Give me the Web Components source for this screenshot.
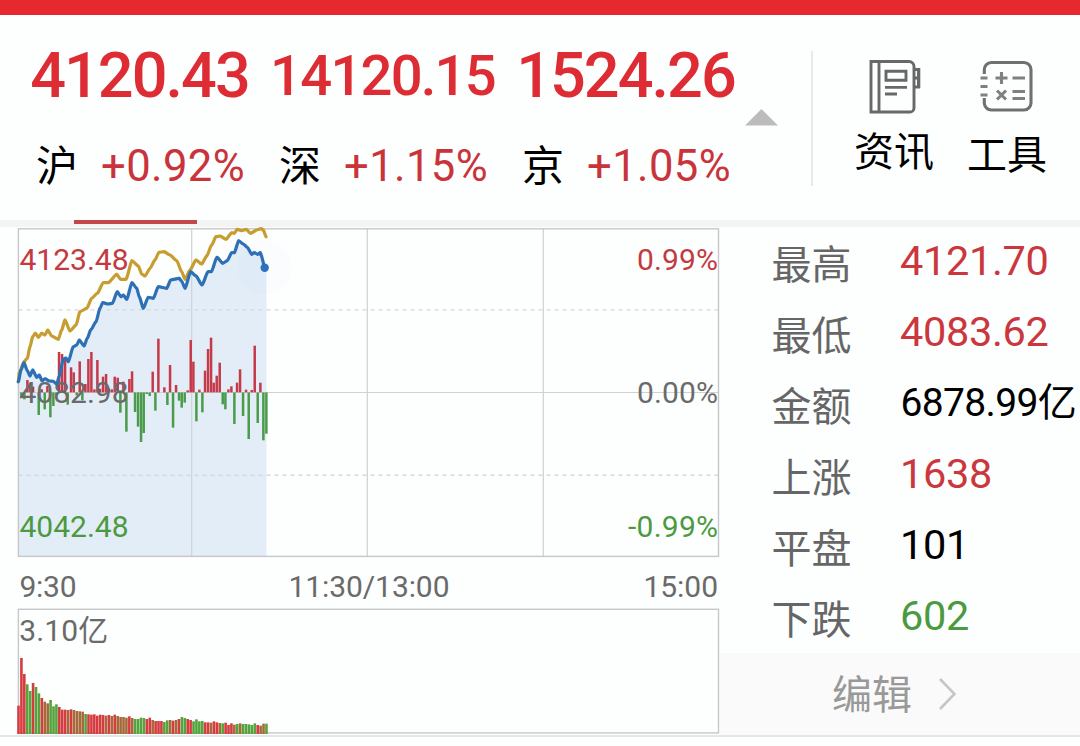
<!DOCTYPE html>
<html lang="zh-CN">
<head>
<meta charset="utf-8">
<title>行情</title>
<style>
html,body{margin:0;height:100%;overflow:hidden;background:#fdfefe}
body{font-family:Roboto,"Noto Sans CJK SC",sans-serif;color:#000}
</style>
</head>
<body>
<market-page></market-page>
<script>
function define(name, html, ready) {
  const t = document.createElement('template');
  t.innerHTML = html;
  customElements.define(name, class extends HTMLElement {
    constructor() {
      super();
      this.attachShadow({mode: 'open'}).append(t.content.cloneNode(true));
    }
    connectedCallback() { if (ready) ready(this, this.shadowRoot); }
  });
}

define('index-quote', `
<style>
:host{display:block;width:243px;flex:none}
.price{height:94px;line-height:94px;font-size:63px;font-weight:500;color:#dd2c33;letter-spacing:-1.95px;text-align:center;white-space:nowrap;padding-left:4px;box-sizing:border-box}
:host([compact]) .price{font-size:56.2px;letter-spacing:-1.8px}
.row{display:flex;height:88px;line-height:88px;padding-left:20px;white-space:nowrap}
.name{width:65px;font-size:42px}
.pct{font-size:43.6px;color:#c9343b;letter-spacing:.4px}
</style>
<div class="price"><slot name="price"></slot></div>
<div class="row"><span class="name"><slot name="name"></slot></span><span class="pct"><slot></slot></span></div>`);

define('tool-button', `
<style>
:host{display:flex;flex-direction:column;align-items:center;width:80px;font-size:40px}
.label{line-height:56px;white-space:nowrap;padding-top:2px}
::slotted(svg){display:block}
</style><slot name="icon"></slot><div class="label"><slot></slot></div>`);

define('app-header', `
<style>
:host{display:flex;height:205px;border-top:15px solid #e6282f;border-bottom:7px solid #f4f4f5;box-sizing:content-box;position:relative}
.quotes{display:flex;padding:14px 0 0 16px;box-sizing:border-box;width:745px}
.arrow{width:34px;height:17px;margin-top:94px;display:block}
.sep{width:2px;height:135px;margin:36px 0 0 32px;background:#e8e9e9}
.tools{display:flex;gap:33px;margin-left:41px}
tool-button:first-child{padding-top:44px}
tool-button:last-child{padding-top:45px}
.mark{position:absolute;left:74px;top:205px;width:123px;height:4px;background:#c2474c}
</style>
<div class="quotes">
<index-quote><span slot="price">4120.43</span><span slot="name">沪</span>+0.92%</index-quote>
<index-quote compact><span slot="price">14120.15</span><span slot="name">深</span>+1.15%</index-quote>
<index-quote><span slot="price">1524.26</span><span slot="name">京</span>+1.05%</index-quote>
</div>
<svg class="arrow" viewBox="0 0 34 17"><path d="M16.5 0 33 16.5H0Z" fill="#bcbcbc"/></svg>
<div class="sep"></div>
<div class="tools">
<tool-button><svg slot="icon" width="54" height="64" viewBox="-1 0 54 64" fill="none" stroke="#686868" stroke-width="2.9"><path d="M3 2.5H41a5 5 0 0 1 5 5V49a4 4 0 0 1-4 4H3ZM11 2V53M46.5 10.5h4v17.5h-4M46 19h5"/><path d="M51 9v20" stroke-width="2.6"/><path d="M18 12.3H38V21.2H18ZM17 28.4H39M17 35H29"/></svg>资讯</tool-button>
<tool-button><svg slot="icon" width="54" height="66" viewBox="0 0 54 66" fill="none" stroke="#707070" stroke-width="3.1"><path d="M4.3 14V9.5a7 7 0 0 1 7-7H44a7 7 0 0 1 7 7V43a7 7 0 0 1-7 7H11.3a7 7 0 0 1-7-7V38"/><path d="M.5 18H7.5M.5 26.5H7.5M.5 35H7.5M15.5 18H27.5M21.5 12V24M32.5 18H45M32.5 31.5H45M32.5 38.5H45M17 30.5 26 39.5M26 30.5 17 39.5" stroke="#808080"/></svg>工具</tool-button>
</div><div class="mark"></div>`);

const MIX = [
 [34,205],[43,208],[52,150],[60,165],[69,170],[86,255],[95,178],[104,238],[112,168],[121,262],[130,228],[139,195],
 [147,66],[156,72],[165,83],[173,224],[183,112],[191,127],[200,196],[209,94],[217,211],[226,162],[235,87],[244,66],[253,178],[262,90],
 [270,176],[279,140],[288,132],[296,176],[305,178],[314,140],[323,143],[331,248],[340,155],[349,305],[358,147],[366,124],[375,246],[384,290],[393,336],[401,309],
 [410,192],[419,198],[428,125],[436,242],[445,26],[463,172],[472,225],[480,105],[489,293],[498,165],[507,212],[515,233],[524,218],
 [533,181],[542,30],[550,95],[559,274],[568,179],[577,247],[585,122],[594,57],[603,23],[611,158],[620,137],[629,98],[638,223],[646,238],
 [655,178],[664,169],[673,282],[681,158],[690,118],[699,258],[708,179],[716,327],[725,180],[734,47],[743,279],[751,158],[760,331],[769,311]];
const VOL = [317,174,222,253,273,249,261,280,294,305,310,300,319,313,321,329,329,330,328,330,333,334,335,342,343,344,343,347,344,345,347,345,348,344,348,351,351,353,349,354,357,357,353,354,357,353,360,363,363,363,366,361,360,362,360,357,351,354,357,360,364,358,364,363,367,367,368,364,367,369,370,368,375,370,374,372,370,372,372,373,375,370,375,377,371,371];
const VCOL = 'rrrggrggrmmgggrrrmrmmmmgrrrrrrmrmrmmmmrmggggrrmrrrggmrmrggrrggggrrmrrmgrrrmgmgggggrmmggg';
const BLUE = [[25,485],[33,450],[42,428],[52,452],[60,468],[68,450],[80,472],[88,465],[96,482],[105,476],[118,483],[130,484],[140,493],[147,470],[160,418],[167,414],[175,425],[190,380],[200,375],[208,360],[222,378],[232,355],[242,330],[258,305],[270,265],[278,248],[295,252],[307,250],[322,215],[333,230],[340,225],[350,238],[366,188],[380,205],[388,230],[400,265],[415,232],[430,235],[445,200],[470,205],[482,180],[508,175],[515,184],[525,205],[542,155],[558,168],[576,195],[594,155],[604,155],[621,112],[638,130],[652,122],[665,98],[673,98],[686,62],[700,72],[712,82],[725,103],[733,98],[743,103],[751,98],[765,143]];
const GOLD = [[25,485],[28,458],[42,425],[52,415],[60,380],[68,350],[76,340],[85,352],[95,340],[105,345],[113,330],[125,348],[145,358],[155,330],[165,300],[180,333],[198,315],[210,275],[230,265],[245,235],[262,220],[280,188],[295,188],[320,163],[332,178],[348,178],[366,122],[385,138],[395,162],[405,168],[420,145],[435,120],[447,97],[462,95],[480,105],[500,122],[515,155],[525,178],[540,150],[558,120],[575,132],[590,108],[605,75],[618,50],[630,48],[648,58],[665,38],[673,40],[682,28],[695,32],[708,28],[722,40],[740,30],[753,26],[760,30],[768,50]];

define('intraday-chart', `
<style>
:host{display:block;width:720px;height:508px}
svg{display:block}
text{font-family:Roboto,"Noto Sans CJK SC",sans-serif;font-size:30px;fill:#6a6a6a}
.r{fill:#c33a40}.g{fill:#4b9a40}
.frame{fill:none;stroke:#c5c7c9;stroke-width:1.4}
.grid{stroke:#cfd2d4;stroke-width:1.2}
.dash{stroke:#d5d8da;stroke-width:1.4;stroke-dasharray:4 4}
.line{fill:none;stroke-width:3.2;stroke-linejoin:round;stroke-linecap:round}
</style>
<svg width="720" height="508" viewBox="0 227 720 508">
<path id="area" fill="#e3edf8"/>
<path class="dash" d="M18.5 309.9H719M18.5 475.2H719"/>
<path class="grid" d="M18.5 392.5H719M191.7 229V556M367.3 229V556M543.3 229V556"/>
<rect class="frame" x="18.4" y="228.8" width="700.1" height="327.6"/>
<rect class="frame" x="18.4" y="609.3" width="700.1" height="123.6"/>
<circle cx="264.5" cy="267.5" r="27" fill="#3d7be0" fill-opacity=".014"/>
<g id="mix"></g>
<text x="19.5" y="269.8" class="r" textLength="109">4123.48</text>
<text x="19.5" y="402.8" textLength="109">4082.98</text>
<text x="19.5" y="536.8" class="g" textLength="109">4042.48</text>
<path id="gold" class="line" stroke="#c79d30"/>
<path id="blue" class="line" stroke="#2d70b5"/>
<circle cx="264.7" cy="267.8" r="4.2" fill="#2f70bd"/>
<text x="637" y="269.8" class="r" textLength="81">0.99%</text>
<text x="637" y="402.8" textLength="81">0.00%</text>
<text x="628" y="536.8" class="g" textLength="90">-0.99%</text>
<text x="19.5" y="596.6" textLength="57">9:30</text>
<text x="288.5" y="596.6" textLength="161">11:30/13:00</text>
<text x="643.5" y="596.6" textLength="74.5">15:00</text>
<text x="19.3" y="640.8" textLength="89">3.10亿</text>
<g id="vol"></g>
</svg>`, (host, root) => {
  const at = ([x, y]) => [x / 3 + 10, y / 3 + 220];
  const fmt = p => p.map(v => v.toFixed(1)).join(' ');
  const path = pts => {
    const p = pts.map(at);
    let d = 'M' + fmt(p[0]);
    for (let i = 1; i < p.length; i++) {
      const m = (p[i - 1][0] + p[i][0]) / 2;
      d += 'C' + fmt([p[i - 1][0] * .4 + m * .6, p[i - 1][1] * .9 + p[i][1] * .1]) + ' ' +
        fmt([p[i][0] * .4 + m * .6, p[i][1] * .9 + p[i - 1][1] * .1]) + ' ' + fmt(p[i]);
    }
    return d;
  };
  root.getElementById('blue').setAttribute('d', path(BLUE));
  root.getElementById('gold').setAttribute('d', path(GOLD));
  root.getElementById('area').setAttribute('d', path(BLUE) + 'L266.5 268V556H18.3Z');
  const bar = (x, y, w, h, c) => `<rect x="${x.toFixed(2)}" y="${y.toFixed(2)}" width="${w}" height="${h.toFixed(2)}" fill="${c}"/>`;
  root.getElementById('mix').innerHTML = MIX.map(([x, v]) => {
    const y = 330 + v / 3, z = 392.4;
    return bar(x / 3 + 8.8, Math.min(y, z), 2.5, Math.abs(y - z), y < z ? '#c53a49' : '#4a9c4a');
  }).join('');
  const col = {r: '#d43c40', g: '#55a33c', m: '#a5693a'};
  root.getElementById('vol').innerHTML = VOL.map((v, i) =>
    bar(17.2 + i * 2.917, 600 + v / 3, 2.6, 134 - v / 3, col[VCOL[i]])).join('');
});

define('stat-row', `
<style>
:host{display:flex;height:71px;line-height:71px;white-space:nowrap;color:#000}
.k{width:128.5px;font-size:40px;color:#666;position:relative;top:3px}
.v{font-size:41.5px;letter-spacing:-.35px;position:relative;top:-1.6px}
:host([up]) .v{color:#ca373d}
:host([down]) .v{color:#4b9a40}
:host([amount]) .v{font-size:39px;letter-spacing:-.65px;padding-left:.5px;top:-.6px}
</style><span class="k"><slot name="k"></slot></span><span class="v"><slot></slot></span>`);

define('edit-bar', `
<style>
:host{display:flex;height:82px;background:#fafafa;align-items:center;padding-left:112px;font-size:40px;color:#999;line-height:82px}
span{padding-top:4px}
svg{margin-left:26px}
</style><span><slot></slot></span><svg width="20" height="34" viewBox="0 0 20 34"><path d="M2 2 16.5 17 2 32" fill="none" stroke="#c6c6c6" stroke-width="2.6"/></svg>`);

define('market-page', `
<style>
:host{display:block;width:1080px;height:746px}
main{display:grid;grid-template-columns:720px 360px;border-bottom:2px solid #e5e6e6}
.stats{padding-left:51.5px}
</style>
<app-header></app-header>
<main>
<intraday-chart></intraday-chart>
<aside>
<div class="stats">
<stat-row up><span slot="k">最高</span>4121.70</stat-row>
<stat-row up><span slot="k">最低</span>4083.62</stat-row>
<stat-row amount><span slot="k">金额</span>6878.99亿</stat-row>
<stat-row up><span slot="k">上涨</span>1638</stat-row>
<stat-row><span slot="k">平盘</span>101</stat-row>
<stat-row down><span slot="k">下跌</span>602</stat-row>
</div>
<edit-bar>编辑</edit-bar>
</aside>
</main>`);
</script>
</body>
</html>
